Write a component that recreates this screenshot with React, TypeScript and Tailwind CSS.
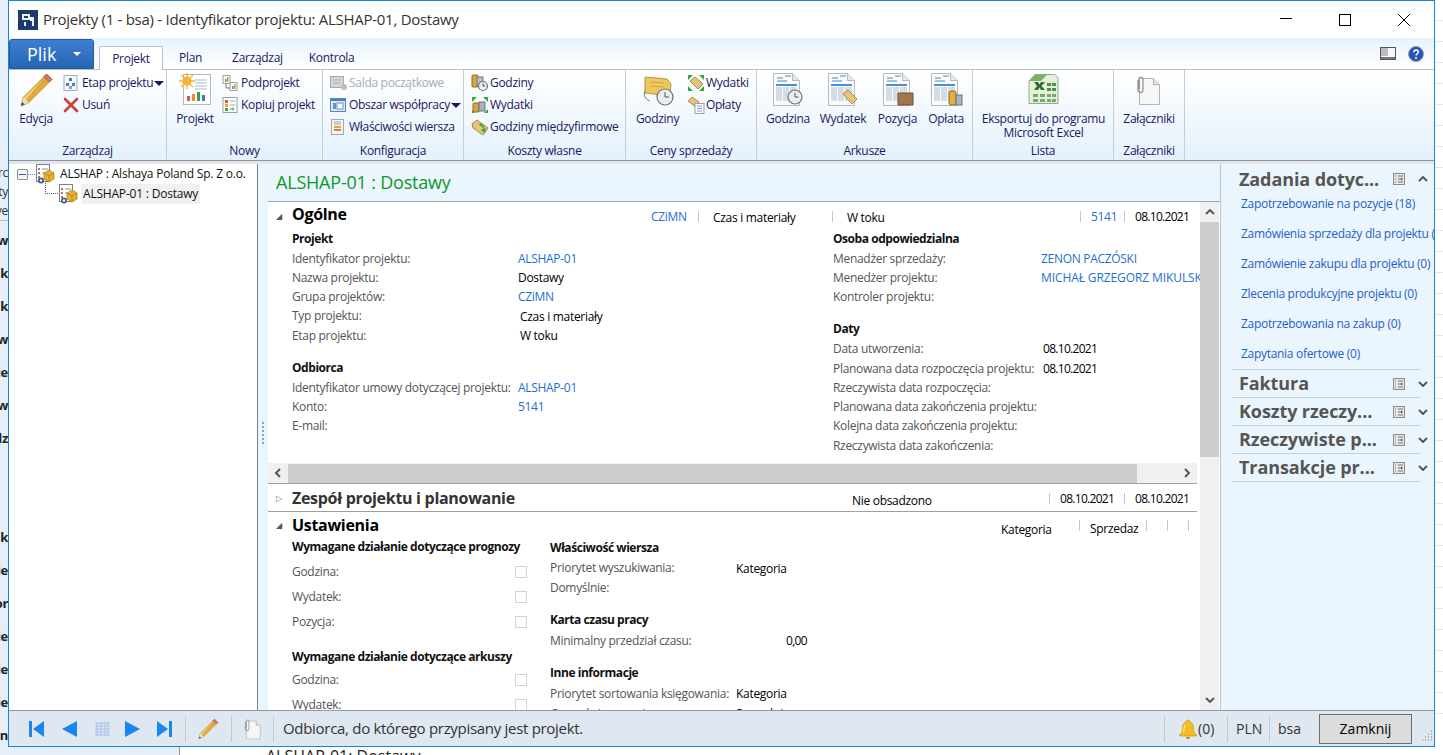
import type { ReactNode } from "react"

const Sep = ({ className = "" }: { className?: string }) => <span className={`block w-px bg-[#c8c8c8] ${className}`} />

// ---------- drawn icons ----------
function Pencil({ size = 36 }: { size?: number }) {
  return (
    <svg width={size} height={size} viewBox="0 0 34 34">
      <path d="M27 2l5 5L10 29l-7 3 2-8z" fill="#f3cf6e" stroke="#8f7a3c" strokeWidth="0.800" />
      <path d="M24.500 5l5 5L10 29l-2.500-2.500z" fill="#e0a93c" />
      <path d="M27 2l5 5-2.500 2.500-5-5z" fill="#d9776b" stroke="#96524a" strokeWidth="0.800" />
      <path d="M5 24l5 5-7 3z" fill="#efe0bd" />
      <path d="M3 32l.8-3.500 2.700 2z" fill="#444" />
    </svg>
  )
}

function Hierarchy() {
  return (
    <svg width="16" height="16" viewBox="0 0 16 16">
      <rect x="1" y="0.500" width="13" height="15" fill="#f4f6f8" stroke="#a9afb5" />
      <rect x="6" y="3" width="3" height="3" fill="#4a7fc4" />
      <rect x="3" y="8" width="3" height="3" fill="#4a7fc4" />
      <rect x="9" y="8" width="3" height="3" fill="#4a7fc4" />
      <rect x="6" y="11" width="3" height="3" fill="#7aa3d8" />
    </svg>
  )
}

function RedX() {
  return (
    <svg width="16" height="16" viewBox="0 0 16 16">
      <path d="M2 2l12 12M14 2L2 14" stroke="#c8413a" strokeWidth="2.600" strokeLinecap="round" />
    </svg>
  )
}

function ProjectIcon() {
  return (
    <svg width="34" height="34" viewBox="0 0 34 34">
      <rect x="5.500" y="1.500" width="27" height="30" fill="#fff" stroke="#b4b8bc" />
      <path d="M17 7h12M17 10h12M17 13h12M17 16h12" stroke="#a9bdd6" strokeWidth="1" />
      <circle cx="9" cy="8" r="4.500" fill="#f6a623" />
      <path d="M9 0v16M1 8h16M3 2l12 12M15 2L3 14" stroke="#f6b73c" strokeWidth="1.400" />
      <rect x="9" y="23" width="3" height="5" fill="#e2573a" />
      <rect x="14" y="21" width="3" height="7" fill="#ef8b2c" />
      <rect x="19" y="19" width="3" height="9" fill="#3f9a45" />
      <rect x="24" y="22" width="3" height="6" fill="#3c78c8" />
    </svg>
  )
}

function SubProject() {
  return (
    <svg width="16" height="16" viewBox="0 0 16 16">
      <rect x="1" y="0.500" width="7" height="8" fill="#fff" stroke="#9aa0a6" />
      <rect x="3" y="4" width="1.500" height="3" fill="#4aa04a" />
      <rect x="5" y="2" width="1.500" height="5" fill="#e2873a" />
      <rect x="8" y="7.500" width="7" height="8" fill="#fff" stroke="#9aa0a6" />
      <rect x="10" y="11" width="1.500" height="3" fill="#4aa04a" />
      <rect x="12" y="9" width="1.500" height="5" fill="#e2873a" />
      <path d="M4 9v4h4" stroke="#777" fill="none" />
    </svg>
  )
}

function CopyProject() {
  return (
    <svg width="16" height="16" viewBox="0 0 16 16">
      <rect x="1" y="0.500" width="14" height="15" fill="#fff" stroke="#9aa0a6" />
      <rect x="3" y="3" width="3" height="3" fill="#e2573a" />
      <rect x="3" y="7" width="3" height="3" fill="#f0a030" />
      <rect x="3" y="11" width="3" height="3" fill="#4aa04a" />
      <path d="M8 4h5M8 8h5" stroke="#8fa6c4" />
      <path d="M8 12h4l-1.500-1.500M12 12l-1.500 1.500" stroke="#3f9a45" fill="none" />
    </svg>
  )
}

function GreyBalance() {
  return (
    <svg width="18" height="16" viewBox="0 0 18 16">
      <rect x="0.500" y="1.500" width="13" height="11" fill="#d6d6d6" stroke="#aaa" />
      <path d="M3 5h8M3 8h8" stroke="#b0b0b0" />
      <circle cx="14" cy="12" r="3" fill="#bbb" />
    </svg>
  )
}

function Workspace() {
  return (
    <svg width="16" height="16" viewBox="0 0 16 16">
      <rect x="0.500" y="1.500" width="15" height="13" fill="#dce8f6" stroke="#5c86b8" />
      <rect x="1" y="2" width="14" height="2" fill="#4b7cb8" />
      <rect x="3" y="6" width="3" height="6" fill="#5f93d0" />
      <rect x="7" y="6" width="6" height="6" fill="#fff" stroke="#5f93d0" />
    </svg>
  )
}

function LineProps() {
  return (
    <svg width="16" height="16" viewBox="0 0 16 16">
      <rect x="1.500" y="0.500" width="12" height="15" fill="#f4f4f4" stroke="#a4a8ac" />
      <path d="M4 3h7M4 5h7" stroke="#8fa6c4" />
      <rect x="4" y="7" width="7" height="2" fill="#e8a33c" />
      <rect x="4" y="10" width="7" height="2" fill="#d9823a" />
    </svg>
  )
}

function Clock({ x, y, r }: { x: number; y: number; r: number }) {
  return (
    <g>
      <circle cx={x} cy={y} r={r} fill="#e9edf0" stroke="#6e7478" strokeWidth="1.200" />
      <path d={`M${x} ${y - r * 0.6}V${y}H${x + r * 0.5}`} stroke="#444" fill="none" strokeWidth="0.900" />
    </g>
  )
}

function CoinsClock() {
  return (
    <svg width="18" height="18" viewBox="0 0 18 18">
      <rect x="1" y="1" width="6" height="12" rx="1" fill="#d7a63c" stroke="#8f6d1e" />
      <rect x="6" y="3" width="6" height="9" fill="#b7bdc2" stroke="#777" />
      <Clock x={12} y={12} r={4.500} />
    </svg>
  )
}

function CoinsArrows() {
  return (
    <svg width="18" height="18" viewBox="0 0 18 18">
      <rect x="2" y="7" width="6" height="9" rx="1" fill="#d7a63c" stroke="#8f6d1e" />
      <rect x="8" y="6" width="6" height="9" fill="#aab2ba" stroke="#6e767c" />
      <path d="M1 1h5L1 6zM17 1v5l-5-5zM1 17v-3l3 3zM17 17h-4l4-4z" fill="#3ea43e" />
    </svg>
  )
}

function TagGreen() {
  return (
    <svg width="18" height="18" viewBox="0 0 18 18">
      <path d="M1 6l5-4 11 8-5 7L2 10z" fill="#e5c477" stroke="#a98a48" />
      <path d="M8 6a4 4 0 0 1 5 5l2-1-1 5-4-3 2-1a3 3 0 0 0-3-3z" fill="#3ea43e" />
    </svg>
  )
}

function BigTag() {
  return (
    <svg width="34" height="34" viewBox="0 0 34 34">
      <path d="M4 4l22 2 4 5-1 12-25-3z" fill="#eec75f" stroke="#b2954a" />
      <path d="M9 9l14 1M9 13l14 1" stroke="#cfa84a" />
      <path d="M4 18c-2 4 0 8 5 10" stroke="#777" fill="none" />
      <Clock x={24} y={24} r={8} />
    </svg>
  )
}

function ArrowsTag() {
  return (
    <svg width="18" height="18" viewBox="0 0 18 18">
      <path d="M3 7l5-4 8 7-5 5z" fill="#e5c477" stroke="#a98a48" />
      <path d="M1 1h5L1 6zM17 1v5l-5-5zM1 17v-5l5 5zM17 17h-5l5-5z" fill="#3ea43e" />
    </svg>
  )
}

function TagDoc() {
  return (
    <svg width="18" height="18" viewBox="0 0 18 18">
      <path d="M1 5l4-4 7 5-3 5z" fill="#e5c477" stroke="#a98a48" />
      <rect x="8" y="7.500" width="9" height="10" fill="#fff" stroke="#9aa0a6" />
      <path d="M10 10h5M10 12.500h5M10 15h5" stroke="#7f9cc0" />
    </svg>
  )
}

function Sheet({ badge }: { badge: ReactNode }) {
  return (
    <svg width="34" height="34" viewBox="0 0 34 34">
      <path d="M2.500 0.500h19l7 7v25h-26z" fill="#fbfbfb" stroke="#b8b8b8" />
      <path d="M21.500 0.500v7h7" fill="#e4e8ec" stroke="#b8b8b8" />
      <path d="M6 5h6M14 3h6M6 8h10" stroke="#3c8ad0" strokeWidth="1" />
      <rect x="5" y="11" width="21" height="2" fill="#4d8fd0" />
      <path d="M5 14h6v14H5zM12 14h6v14h-6zM19 14h7v14h-7z" fill="#d4dde6" />
      {badge}
    </svg>
  )
}

function Excel() {
  return (
    <svg width="34" height="32" viewBox="0 0 34 32">
      <path d="M8 0.500h20l3 3v26H2V7z" fill="#e4f0dc" stroke="#8ab080" />
      <path d="M2 7l6-6.500h12L14 7z" fill="#7fb069" />
      <path d="M7 8l3 4-3 4h4l1.500-2.500L14 16h4l-3.500-4L18 8h-4l-1.500 2.500L11 8z" fill="#2f6f31" />
      <rect x="20" y="9" width="4" height="3" fill="#4e8f49" />
      <rect x="25" y="9" width="4" height="3" fill="#4e8f49" />
      <rect x="20" y="14" width="4" height="3" fill="#4e8f49" />
      <rect x="25" y="14" width="4" height="3" fill="#4e8f49" />
      <path d="M6 20h5v3H6zM13 20h5v3h-5zM20 20h4v3h-4zM25 20h4v3h-4zM6 25h5v3H6zM13 25h5v3h-5zM20 25h4v3h-4zM25 25h4v3h-4z" fill="#78a86c" />
    </svg>
  )
}

function Attach({ w = 26, h = 32 }: { w?: number; h?: number }) {
  return (
    <svg width={w} height={h} viewBox="0 0 26 32">
      <path d="M3.500 4.500h14l6 6v20h-20z" fill="#f6f6f4" stroke="#b4b4b0" />
      <path d="M17.500 4.500v6h6" fill="#e2e2de" stroke="#b4b4b0" />
      <path d="M2 5v10a2.500 2.500 0 0 0 5 0V4a2 2 0 0 0-4 0v10" fill="none" stroke="#8a8f94" strokeWidth="1.200" transform="translate(0 1)" />
    </svg>
  )
}

function ProjectTree() {
  return (
    <svg width="20" height="20" viewBox="0 0 20 20" className="shrink-0">
      <rect x="1.500" y="0.500" width="13" height="17" fill="#fff" stroke="#7a8088" />
      <path d="M3 4h2v2H3zM3 8h2v2H3zM3 12h2v2H3z" fill="#c86a5a" />
      <path d="M7 5h6M7 9h3" stroke="#8a94a0" />
      <path d="M9 9l5-3 5 3v6l-5 3-5-3z" fill="#e6b22e" stroke="#a37d1c" strokeWidth="0.700" />
      <path d="M9 9l5 3 5-3M14 12v6" stroke="#a37d1c" strokeWidth="0.700" fill="none" />
      <circle cx="6" cy="16.500" r="3" fill="#3f5c80" />
      <circle cx="6" cy="16.500" r="1.200" fill="#fff" />
    </svg>
  )
}

function PaneIcon() {
  return (
    <svg width="12" height="12" viewBox="0 0 12 12" className="shrink-0">
      <rect x="0.500" y="0.500" width="11" height="11" fill="#e4e4e4" stroke="#8c8c8c" />
      <path d="M2 3h1M2 6h1M2 9h1M5 3h5M5 6h3M5 9h5" stroke="#777" />
      <path d="M8 4.500L10 6 8 7.500z" fill="#555" />
    </svg>
  )
}

function Chevron({ dir, className = "" }: { dir: "up" | "down" | "left" | "right"; className?: string }) {
  const d = { up: "M1 7l4-4 4 4", down: "M1 3l4 4 4-4", left: "M7 1L3 5l4 4", right: "M3 1l4 4-4 4" }[dir]
  return (
    <svg width="10" height="10" viewBox="0 0 10 10" className={`shrink-0 ${className}`}>
      <path d={d} fill="none" stroke="#505050" strokeWidth="1.800" />
    </svg>
  )
}

function NavIcon({ kind }: { kind: "first" | "prev" | "next" | "last" }) {
  const d = {
    first: "M0 0h3v16H0zM15 0v16L4 8z",
    prev: "M15 0v16L0 8z",
    next: "M0 0v16l15-8z",
    last: "M0 0v16l11-8zM12 0h3v16h-3z",
  }[kind]
  return (
    <svg width="15" height="16" viewBox="0 0 15 16" className="shrink-0">
      <path d={d} fill="#1a86f0" />
    </svg>
  )
}

function Bell() {
  return (
    <svg width="20" height="20" viewBox="0 0 20 20">
      <path d="M10 1a2 2 0 0 1 2 2c3 1 3.500 4 3.500 7 0 3 1.500 4.500 3 6v1H1.500v-1c1.500-1.500 3-3 3-6 0-3 .5-6 3.500-7a2 2 0 0 1 2-2z" fill="#f2bd22" stroke="#c98f0f" strokeWidth="0.600" />
      <path d="M7 6c-1 2-1 5-1.500 7" stroke="#fbe58a" strokeWidth="1.500" fill="none" />
      <path d="M8 18a2 2 0 0 0 4 0z" fill="#b8800c" />
    </svg>
  )
}

// ---------- ribbon ----------
function RibbonGroup({ label, className, children }: { label: string; className: string; children: ReactNode }) {
  return (
    <div className={`flex flex-col h-full border-r border-[#c5ced8] shrink-0 ${className}`}>
      <div className="flex flex-1 min-h-0 pt-[2px]">{children}</div>
      <div className="h-[20px] leading-[22px] text-center text-[#1b1760]">{label}</div>
    </div>
  )
}

function LargeBtn({ icon, label, className = "" }: { icon: ReactNode; label: ReactNode; className?: string }) {
  return (
    <div className={`flex flex-col items-center text-center text-[#1b1760] leading-[14px] shrink-0 ${className}`}>
      <div className="h-[34px] mt-[1px] mb-[5px] flex items-center justify-center">{icon}</div>
      <div>{label}</div>
    </div>
  )
}

function SmallBtn({ icon, label, caret, muted }: { icon: ReactNode; label: string; caret?: boolean; muted?: boolean }) {
  return (
    <div className={`h-[22px] flex items-center whitespace-nowrap ${muted ? "text-[#a8adb4]" : "text-[#1b1760]"}`}>
      <span className="w-[19px] flex items-center shrink-0">{icon}</span>
      <span>{label}</span>
      {caret && <span className="w-0 h-0 border-x-[5px] border-x-transparent border-t-[5px] border-t-[#1b1760] ml-[1px]" />}
    </div>
  )
}

// ---------- form ----------
const fieldLabel = "text-[#555] whitespace-nowrap"
const dateText = "tracking-[-0.7px]"
const sectionTitle = "font-bold text-[16px] shrink-0 tracking-[-0.3px]"

function Field({ label, value, link, labelClass, valueClass = "" }: { label: string; value?: string; link?: boolean; labelClass: string; valueClass?: string }) {
  return (
    <div className="flex h-[19.25px] items-center whitespace-nowrap">
      <span className={`${fieldLabel} shrink-0 ${labelClass}`}>{label}</span>
      {value && <span className={`${link ? "text-[#1f6fd0]" : "text-black"} ${valueClass}`}>{value}</span>}
    </div>
  )
}

function SubHead({ children, className = "" }: { children: ReactNode; className?: string }) {
  return <div className={`font-bold text-[#111] h-[19px] flex items-center whitespace-nowrap tracking-[-0.45px] ${className}`}>{children}</div>
}

function Check({ label }: { label: string }) {
  return (
    <div className="flex h-[25px] items-center">
      <span className={`${fieldLabel} w-[223px]`}>{label}</span>
      <span className="w-[12px] h-[12px] border border-[#d4d4d4] bg-white" />
    </div>
  )
}

function SummaryCell({ className, sep = true, children }: { className: string; sep?: boolean; children?: ReactNode }) {
  return (
    <div className={`relative h-[19px] flex items-center shrink-0 whitespace-nowrap ${className}`}>
      {sep && <Sep className="absolute left-0 top-[5px] h-[11px]" />}
      {children}
    </div>
  )
}

const actionPaneLinks = [
  "Zapotrzebowanie na pozycje (18)",
  "Zamówienia sprzedaży dla projektu (0)",
  "Zamówienie zakupu dla projektu (0)",
  "Zlecenia produkcyjne projektu (0)",
  "Zapotrzebowania na zakup (0)",
  "Zapytania ofertowe (0)",
]

const sideLetters = ["w", "k", "k", "w", "ie", "w", "dz", "", "", "k", "ie", "or", "ie", "ie", "ie", "n"]

export default function App() {
  return (
    <div className="w-[1443px] h-[755px] overflow-hidden bg-white text-[12px] font-['Open_Sans',sans-serif] tracking-[-0.3px] flex flex-col">
      <div className="flex h-[747px] shrink-0">
        {/* window behind, left edge */}
        <div className="w-[8px] shrink-0 overflow-hidden bg-[#e6eef8] flex flex-col items-end">
          <div className="h-[164px] shrink-0" />
          <div className="h-[19px] shrink-0 text-[#333] whitespace-nowrap">rc</div>
          <div className="h-[19px] shrink-0 text-[#333] whitespace-nowrap">ty</div>
          <div className="h-[19px] shrink-0 text-[#333] whitespace-nowrap border-b border-[#bbb] mb-[10px]">ye</div>
          {sideLetters.map((s, i) => (
            <div key={i} className="h-[33px] shrink-0 font-bold text-[#222] whitespace-nowrap text-[13px]">{s}</div>
          ))}
        </div>

        {/* main window */}
        <div className="w-[1427px] shrink-0 border border-[#1883d7] flex flex-col bg-[#ebf5fe] overflow-hidden">
          <div className="h-[37px] shrink-0 bg-white flex items-center pl-[9px]">
            <svg width="20" height="20" viewBox="0 0 20 20" className="shrink-0">
              <rect width="20" height="20" fill="#1c3a6b" />
              <path d="M4 4h8v6H4zM12 7h4v9h-2v-5h-2zM6 12h2v4H6z" fill="#e8edf3" />
              <path d="M6 6h4v2H6z" fill="#1c3a6b" />
            </svg>
            <span className="ml-[5px] text-[15px] tracking-[-0.28px] text-[#333]">Projekty (1 - bsa) - Identyfikator projektu: ALSHAP-01, Dostawy</span>
            <div className="ml-auto flex items-center">
              <svg width="14" height="14" viewBox="0 0 14 14" className="mr-[45px]"><path d="M1 5.500h12" stroke="#000" /></svg>
              <svg width="14" height="14" viewBox="0 0 14 14" className="mr-[45px]"><rect x="1.500" y="1.500" width="11" height="11" fill="none" stroke="#000" /></svg>
              <svg width="14" height="14" viewBox="0 0 14 14" className="mr-[23px]"><path d="M1 1l12 12M13 1L1 13" stroke="#000" /></svg>
            </div>
          </div>

          {/* ribbon tabs */}
          <div className="h-[31px] shrink-0 flex items-end bg-gradient-to-b from-[#e6f3fe] to-white relative">
            <div className="w-[85px] h-[30px] rounded-t-[3px] bg-gradient-to-b from-[#3f7fcf] to-[#2566b4] border border-[#1f5aa6] flex items-center text-white text-[18px] tracking-normal pl-[17px]">
              Plik
              <span className="ml-auto mr-[12px] w-0 h-0 border-x-[4px] border-x-transparent border-t-[4px] border-t-white" />
            </div>
            <div className="ml-[5px] w-[64px] h-[24px] -mb-px bg-white border border-b-0 border-[#b6c0ca] rounded-t-[2px] flex items-center justify-center text-[#1b1760] z-10">Projekt</div>
            <div className="h-[23px] flex items-center text-[#1b1760] ml-[16px]">Plan</div>
            <div className="h-[23px] flex items-center text-[#1b1760] ml-[30px]">Zarządzaj</div>
            <div className="h-[23px] flex items-center text-[#1b1760] ml-[26px]">Kontrola</div>
            <div className="ml-auto flex items-center h-[31px] pb-0 mr-[10px] gap-[12px]">
              <svg width="16" height="13" viewBox="0 0 16 13"><rect x="0.500" y="0.500" width="15" height="12" fill="#f6f6f6" stroke="#555" /><rect x="1" y="1" width="7" height="8" fill="#bcbcbc" /><rect x="1" y="10" width="14" height="2" fill="#777" /></svg>
              <svg width="16" height="16" viewBox="0 0 16 16">
                <circle cx="8" cy="8" r="7.500" fill="#2a55b4" stroke="#8f9bb0" />
                <path d="M5.800 6.200c0-1.300 1-2.200 2.300-2.200s2.200.8 2.200 2c0 1.700-2.200 1.800-2.200 3.500" fill="none" stroke="#fff" strokeWidth="1.500" />
                <circle cx="8" cy="12" r="1" fill="#fff" />
              </svg>
            </div>
          </div>

          {/* ribbon body */}
          <div className="h-[92px] shrink-0 flex bg-gradient-to-b from-white to-[#e4f1fc] border-y border-y-[#b8c0c8] border-b-[#8e959c]">
            <RibbonGroup label="Zarządzaj" className="w-[158px]">
              <LargeBtn icon={<Pencil />} label="Edycja" className="w-[34px] ml-[10px]" />
              <div className="ml-[10px] flex flex-col">
                <SmallBtn icon={<Hierarchy />} label="Etap projektu" caret />
                <SmallBtn icon={<RedX />} label="Usuń" />
              </div>
            </RibbonGroup>
            <RibbonGroup label="Nowy" className="w-[156px]">
              <LargeBtn icon={<ProjectIcon />} label="Projekt" className="w-[38px] ml-[9px]" />
              <div className="ml-[8px] flex flex-col">
                <SmallBtn icon={<SubProject />} label="Podprojekt" />
                <SmallBtn icon={<CopyProject />} label="Kopiuj projekt" />
              </div>
            </RibbonGroup>
            <RibbonGroup label="Konfiguracja" className="w-[141px]">
              <div className="ml-[7px] flex flex-col">
                <SmallBtn icon={<GreyBalance />} label="Salda początkowe" muted />
                <SmallBtn icon={<Workspace />} label="Obszar współpracy" caret />
                <SmallBtn icon={<LineProps />} label="Właściwości wiersza" />
              </div>
            </RibbonGroup>
            <RibbonGroup label="Koszty własne" className="w-[162px]">
              <div className="ml-[7px] flex flex-col">
                <SmallBtn icon={<CoinsClock />} label="Godziny" />
                <SmallBtn icon={<CoinsArrows />} label="Wydatki" />
                <SmallBtn icon={<TagGreen />} label="Godziny międzyfirmowe" />
              </div>
            </RibbonGroup>
            <RibbonGroup label="Ceny sprzedaży" className="w-[131px]">
              <LargeBtn icon={<BigTag />} label="Godziny" className="w-[43px] ml-[10px]" />
              <div className="ml-[8px] flex flex-col">
                <SmallBtn icon={<ArrowsTag />} label="Wydatki" />
                <SmallBtn icon={<TagDoc />} label="Opłaty" />
              </div>
            </RibbonGroup>
            <RibbonGroup label="Arkusze" className="w-[216px]">
              <LargeBtn
                icon={<Sheet badge={<Clock x={24} y={24} r={7} />} />}
                label="Godzina"
                className="w-[44px] ml-[9px]"
              />
              <LargeBtn
                icon={<Sheet badge={<path d="M17 21l5-4 9 9-5 5z" fill="#e5c477" stroke="#a98a48" />} />}
                label="Wydatek"
                className="w-[46px] ml-[10px]"
              />
              <LargeBtn
                icon={<Sheet badge={<path d="M17 20h15v12H17z" fill="#a0774c" stroke="#6e5032" />} />}
                label="Pozycja"
                className="w-[41px] ml-[11px]"
              />
              <LargeBtn
                icon={<Sheet badge={<g><rect x="20" y="18" width="7" height="14" rx="2" fill="#e2b23c" stroke="#8f6d1e" /><rect x="27" y="22" width="6" height="10" fill="#aab2ba" stroke="#6e767c" /></g>} />}
                label="Opłata"
                className="w-[36px] ml-[10px]"
              />
            </RibbonGroup>
            <RibbonGroup label="Lista" className="w-[141px]">
              <LargeBtn
                icon={<Excel />}
                label={<>Eksportuj do programu<br />Microsoft Excel</>}
                className="w-[141px]"
              />
            </RibbonGroup>
            <RibbonGroup label="Załączniki" className="w-[71px]">
              <LargeBtn icon={<Attach />} label="Załączniki" className="w-[70px]" />
            </RibbonGroup>
          </div>
          <div className="h-[3px] shrink-0 bg-[#e2e6ea]" />

          {/* content */}
          <div className="flex-1 min-h-0 flex">
            {/* tree */}
            <div className="w-[249px] shrink-0 bg-white border-r border-[#7a8490] pl-[8px] text-[#111] tracking-[-0.2px]">
              <div className="h-[20px] flex items-center whitespace-nowrap">
                <span className="w-[11px] h-[11px] border border-[#8c939a] rounded-[1px] flex items-center justify-center bg-[#f4f4f4] shrink-0">
                  <span className="block w-[7px] h-px bg-[#3a5a8a]" />
                </span>
                <span className="w-[7px] border-t border-dotted border-[#777]" />
                <ProjectTree />
                <span className="ml-[5px]">ALSHAP : Alshaya Poland Sp. Z o.o.</span>
              </div>
              <div className="h-[20px] flex items-center whitespace-nowrap ml-[41px] relative">
                <span className="absolute -left-[13px] -top-[3px] w-[13px] h-[13px] border-l border-b border-dotted border-[#555]" />
                <ProjectTree />
                <span className="ml-[3px] bg-[#f0f0f0] h-[20px] leading-[20px] px-[2px]">ALSHAP-01 : Dostawy</span>
              </div>
            </div>

            {/* splitter */}
            <div className="w-[10px] shrink-0 flex flex-col items-center justify-center gap-[2px] pb-[8px]">
              {[0, 1, 2, 3, 4, 5].map((i) => <span key={i} className="block w-[2px] h-[2px] bg-[#9aa4ae]" />)}
            </div>

            {/* form column */}
            <div className="w-[953px] shrink-0 flex flex-col border-r border-[#b8c4d0]">
              <div className="h-[37px] shrink-0 flex items-center pl-[8px] text-[18px] tracking-[-0.2px] text-[#0b9a1f]">ALSHAP-01 : Dostawy</div>
              <div className="flex-1 min-h-0 flex border-t border-[#9aa2aa] bg-white">
                <div className="w-[932px] shrink-0 flex flex-col overflow-hidden">
                  {/* Ogolne */}
                  <div className="h-[261px] shrink-0 flex flex-col overflow-hidden">
                    <div className="h-[27px] shrink-0 flex items-center">
                      <span className="w-[12px] pl-[8px] shrink-0 text-[#555] text-[8px]">◢</span>
                      <span className={`w-[371px] pl-[12px] mb-[4px] text-black ${sectionTitle}`}>Ogólne</span>
                      <SummaryCell className="w-[47px]" sep={false}><span className="mt-[3px] text-[#1f6fd0]">CZiMN</span></SummaryCell>
                      <SummaryCell className="w-[134px] pl-[15px]"><span className="mt-[5px]">Czas i materiały</span></SummaryCell>
                      <SummaryCell className="w-[248px] pl-[15px]"><span className="mt-[5px]">W toku</span></SummaryCell>
                      <SummaryCell className="w-[44px] pl-[11px]"><span className="mt-[3px] text-[#1f6fd0]">5141</span></SummaryCell>
                      <SummaryCell className="w-[76px] pl-[11px]"><span className={`mt-[3px] ${dateText}`}>08.10.2021</span></SummaryCell>
                    </div>
                    <div className="flex pl-[24px]">
                      <div className="w-[541px] shrink-0">
                        <SubHead className="mb-[1px]">Projekt</SubHead>
                        <Field label="Identyfikator projektu:" value="ALSHAP-01" link labelClass="w-[226px]" />
                        <Field label="Nazwa projektu:" value="Dostawy" labelClass="w-[226px]" />
                        <Field label="Grupa projektów:" value="CZiMN" link labelClass="w-[226px]" />
                        <Field label="Typ projektu:" value="Czas i materiały" labelClass="w-[226px]" valueClass="ml-[2px] mt-[1px]" />
                        <Field label="Etap projektu:" value="W toku" labelClass="w-[226px]" valueClass="ml-[2px] mt-[1px]" />
                        <SubHead className="mt-[13px] mb-[1px]">Odbiorca</SubHead>
                        <Field label="Identyfikator umowy dotyczącej projektu:" value="ALSHAP-01" link labelClass="w-[226px]" />
                        <Field label="Konto:" value="5141" link labelClass="w-[226px]" />
                        <Field label="E-mail:" labelClass="w-[226px]" />
                      </div>
                      <div className="w-[367px] shrink-0">
                        <SubHead className="mb-[1px]">Osoba odpowiedzialna</SubHead>
                        <Field label="Menadżer sprzedaży:" value="ZENON PACZÓSKI" link labelClass="w-[208px]" />
                        <Field label="Menedżer projektu:" value="MICHAŁ GRZEGORZ MIKULSKI" link labelClass="w-[208px]" valueClass="tracking-[-0.1px]" />
                        <Field label="Kontroler projektu:" labelClass="w-[208px]" />
                        <SubHead className="mt-[13px] mb-[1px]">Daty</SubHead>
                        <Field label="Data utworzenia:" value="08.10.2021" labelClass="w-[210px]" valueClass={dateText} />
                        <Field label="Planowana data rozpoczęcia projektu:" value="08.10.2021" labelClass="w-[210px]" valueClass={dateText} />
                        <Field label="Rzeczywista data rozpoczęcia:" labelClass="w-[210px]" />
                        <Field label="Planowana data zakończenia projektu:" labelClass="w-[210px]" />
                        <Field label="Kolejna data zakończenia projektu:" labelClass="w-[210px]" />
                        <Field label="Rzeczywista data zakończenia:" labelClass="w-[210px]" />
                      </div>
                    </div>
                  </div>
                  {/* horizontal scrollbar */}
                  <div className="h-[20px] shrink-0 bg-[#f0f0f0] flex items-center w-[929px]">
                    <div className="w-[20px] flex justify-center shrink-0"><Chevron dir="left" /></div>
                    <div className="w-[849px] h-[19px] bg-[#cdcdcd] shrink-0" />
                    <div className="ml-auto w-[20px] flex justify-center shrink-0"><Chevron dir="right" /></div>
                  </div>
                  {/* Zespol */}
                  <div className="h-[29px] shrink-0 border-y border-[#a0a0a0] flex items-center w-[929px]">
                    <span className="w-[12px] pl-[8px] shrink-0 text-[#777] text-[8px]">▷</span>
                    <span className={`w-[572px] pl-[12px] text-[#333] ${sectionTitle}`}>Zespół projektu i planowanie</span>
                    <SummaryCell className="w-[197px]" sep={false}><span className="mt-[7px]">Nie obsadzono</span></SummaryCell>
                    <SummaryCell className="w-[75px] pl-[11px]"><span className={`mt-[3px] ${dateText}`}>08.10.2021</span></SummaryCell>
                    <SummaryCell className="w-[73px] pl-[11px]"><span className={`mt-[3px] ${dateText}`}>08.10.2021</span></SummaryCell>
                  </div>
                  {/* Ustawienia */}
                  <div className="flex-1 min-h-0 overflow-hidden">
                    <div className="h-[25px] flex items-center">
                      <span className="w-[12px] pl-[8px] shrink-0 text-[#555] text-[8px]">◢</span>
                      <span className={`w-[721px] pl-[12px] text-black ${sectionTitle}`}>Ustawienia</span>
                      <SummaryCell className="w-[78px]" sep={false}><span className="mt-[10px]">Kategoria</span></SummaryCell>
                      <SummaryCell className="w-[67px] pl-[11px]"><span className="mt-[8px]">Sprzedaz</span></SummaryCell>
                      <SummaryCell className="w-[21px]" />
                      <SummaryCell className="w-[21px]" />
                      <SummaryCell className="w-[4px]" />
                    </div>
                    <div className="flex pl-[24px]">
                      <div className="w-[258px] shrink-0">
                        <SubHead className="mb-[3px]">Wymagane działanie dotyczące prognozy</SubHead>
                        <Check label="Godzina:" />
                        <Check label="Wydatek:" />
                        <Check label="Pozycja:" />
                        <SubHead className="mt-[13px] mb-[1px]">Wymagane działanie dotyczące arkuszy</SubHead>
                        <Check label="Godzina:" />
                        <Check label="Wydatek:" />
                      </div>
                      <div className="w-[300px] shrink-0 pt-[1px]">
                        <SubHead className="mb-[2px]">Właściwość wiersza</SubHead>
                        <Field label="Priorytet wyszukiwania:" value="Kategoria" labelClass="w-[186px] -mt-[1px]" valueClass="mt-[1px]" />
                        <Field label="Domyślnie:" labelClass="w-[186px]" />
                        <SubHead className="mt-[13px] mb-[2px]">Karta czasu pracy</SubHead>
                        <Field label="Minimalny przedział czasu:" value="0,00" labelClass="w-[236px]" valueClass="tracking-[-0.7px]" />
                        <SubHead className="mt-[13px] mb-[2px]">Inne informacje</SubHead>
                        <Field label="Priorytet sortowania księgowania:" value="Kategoria" labelClass="w-[186px]" />
                        <Field label="Grupa księgowania:" value="Sprzedaż" labelClass="w-[186px]" />
                      </div>
                    </div>
                  </div>
                </div>
                {/* vertical scrollbar */}
                <div className="w-[19px] shrink-0 bg-[#f0f0f0] flex flex-col items-center">
                  <div className="h-[20px] shrink-0 flex items-center justify-center"><Chevron dir="up" /></div>
                  <div className="h-[235px] w-full shrink-0 bg-[#cdcdcd]" />
                  <div className="mt-auto h-[20px] shrink-0 flex items-center justify-center"><Chevron dir="down" /></div>
                </div>
              </div>
            </div>

            {/* action pane */}
            <div className="flex-1 min-w-0 overflow-hidden pl-[11px] pr-[14px]">
              <div className="h-[30px] flex items-center pl-[7px]">
                <span className="w-[154px] shrink-0 text-[18px] font-bold text-[#555] whitespace-nowrap tracking-[-0.1px]">Zadania dotyc...</span>
                <PaneIcon />
                <Chevron dir="up" className="ml-[13px]" />
              </div>
              <div className="border-b border-[#bcd0e4] -mt-[5px]">
                {actionPaneLinks.map((t) => (
                  <div key={t} className="h-[30px] flex items-center pl-[9px] text-[#1f5fc8] whitespace-nowrap w-[230px]">{t}</div>
                ))}
              </div>
              {["Faktura", "Koszty rzeczy...", "Rzeczywiste p...", "Transakcje pr..."].map((t) => (
                <div key={t} className="h-[28px] flex items-center pl-[7px] border-b border-[#bcd0e4]">
                  <span className="w-[154px] shrink-0 text-[18px] font-bold text-[#555] whitespace-nowrap tracking-[-0.1px]">{t}</span>
                  <PaneIcon />
                  <Chevron dir="down" className="ml-[13px]" />
                </div>
              ))}
            </div>
          </div>

          {/* status bar */}
          <div className="h-[36px] shrink-0 bg-[#dfe7f0] border-t border-[#8e9aa6] flex items-center text-[#333]">
            <span className="ml-[20px]"><NavIcon kind="first" /></span>
            <span className="ml-[18px]"><NavIcon kind="prev" /></span>
            <svg width="15" height="14" viewBox="0 0 15 14" className="ml-[18px] shrink-0">
              <path d="M0 1h15M0 4h15M0 7h15M0 10h15M0 13h15M2 0v14M6 0v14M10 0v14M13 0v14" stroke="#a9c3ec" />
            </svg>
            <span className="ml-[15px]"><NavIcon kind="next" /></span>
            <span className="ml-[17px]"><NavIcon kind="last" /></span>
            <Sep className="ml-[13px] h-[26px] bg-[#6f8296]" />
            <span className="ml-[11px] shrink-0"><Pencil size={22} /></span>
            <Sep className="ml-[12px] h-[26px] bg-[#6f8296]" />
            <span className="ml-[12px] shrink-0"><Attach w={18} h={22} /></span>
            <Sep className="ml-[11px] h-[26px] bg-[#6f8296]" />
            <span className="ml-[9px] text-[15px] tracking-[-0.3px] whitespace-nowrap">Odbiorca, do którego przypisany jest projekt.</span>
            <div className="ml-auto flex items-center text-[14px] tracking-normal">
              <Sep className="h-[26px] bg-[#6f8296]" />
              <span className="ml-[13px] shrink-0"><Bell /></span>
              <span className="w-[29px]">(0)</span>
              <Sep className="h-[26px] bg-[#6f8296]" />
              <span className="ml-[8px] w-[33px]">PLN</span>
              <Sep className="h-[26px] bg-[#6f8296]" />
              <span className="ml-[8px] w-[41px]">bsa</span>
              <div className="w-[93px] h-[30px] bg-[#dcdcdc] border border-[#6e6e6e] flex items-center justify-center text-black">Zamknij</div>
              <svg width="14" height="14" viewBox="0 0 14 14" className="ml-[7px] mr-[1px] mt-[14px] shrink-0">
                <path d="M12 2h1M9 5h1M12 5h1M6 8h1M9 8h1M12 8h1M3 11h1M6 11h1M9 11h1M12 11h1" stroke="#a8b4c0" strokeWidth="2" />
              </svg>
            </div>
          </div>
        </div>

        {/* window behind, right edge */}
        <div className="flex-1 min-w-0 bg-white flex flex-col overflow-hidden">
          {Array.from({ length: 34 }).map((_, i) => (
            <div key={i} className="h-[21px] shrink-0 border-b border-[#dde8f4]" />
          ))}
        </div>
      </div>

      {/* window behind, bottom edge */}
      <div className="h-[8px] flex overflow-hidden">
        <div className="w-[180px] bg-[#e6eef8] border-r border-[#999] shrink-0" />
        <div className="pl-[86px] text-[16px] leading-[18px] text-[#222] whitespace-nowrap tracking-normal">ALSHAP-01: Dostawy</div>
      </div>
    </div>
  )
}
